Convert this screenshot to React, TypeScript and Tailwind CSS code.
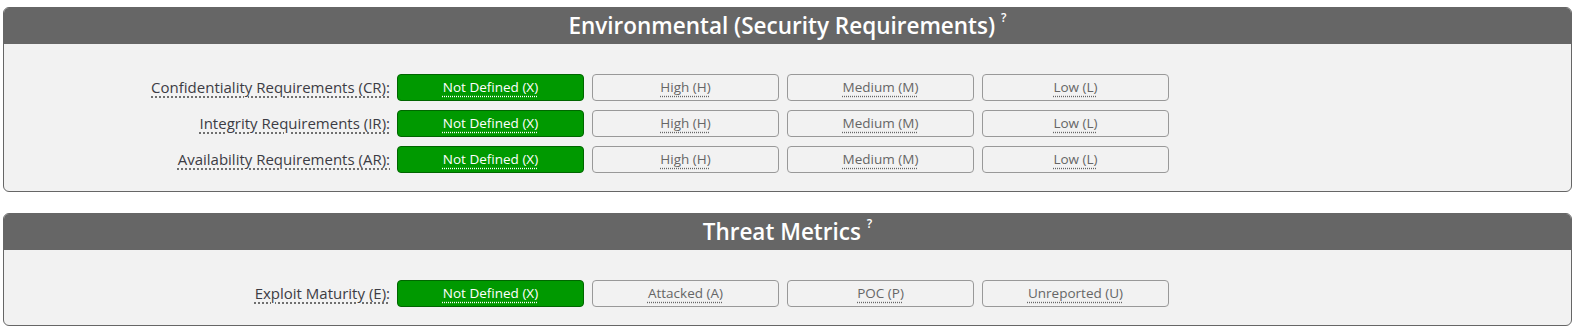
import React from 'react';

interface Metric {
  label: string;
  options: string[];
  selected: number;
}

interface Section {
  title: string;
  metrics: Metric[];
}

const sections: Section[] = [
  {
    title: 'Environmental (Security Requirements)',
    metrics: [
      { label: 'Confidentiality Requirements (CR):', options: ['Not Defined (X)', 'High (H)', 'Medium (M)', 'Low (L)'], selected: 0 },
      { label: 'Integrity Requirements (IR):', options: ['Not Defined (X)', 'High (H)', 'Medium (M)', 'Low (L)'], selected: 0 },
      { label: 'Availability Requirements (AR):', options: ['Not Defined (X)', 'High (H)', 'Medium (M)', 'Low (L)'], selected: 0 },
    ],
  },
  {
    title: 'Threat Metrics',
    metrics: [
      { label: 'Exploit Maturity (E):', options: ['Not Defined (X)', 'Attacked (A)', 'POC (P)', 'Unreported (U)'], selected: 0 },
    ],
  },
];

const MetricRow: React.FC<{ metric: Metric }> = ({ metric }) => (
  <div className="flex items-center">
    <div className="w-[393px] shrink-0 pr-[7px] text-right text-[15px] text-[#3c3c44]">
      <span className="underline decoration-dotted decoration-[#444] underline-offset-[3px]">{metric.label}</span>
    </div>
    <div className="flex gap-[8px]">
      {metric.options.map((opt, i) => (
        <button
          key={opt}
          className={
            i === metric.selected
              ? 'w-[187px] h-[27px] rounded-[4px] border border-[#006600] bg-[#009900] text-[13.5px] text-white'
              : 'w-[187px] h-[27px] rounded-[4px] border border-[#999] bg-[#f2f2f2] text-[13.5px] text-[#666]'
          }
        >
          <span className="underline decoration-dotted underline-offset-[3px]">{opt}</span>
        </button>
      ))}
    </div>
  </div>
);

export default function App() {
  return (
    <div className="bg-white pt-[7px] pl-[3px] pr-[6px] flex flex-col gap-[21px] font-['Open_Sans',sans-serif]">
      {sections.map(s => (
        <div key={s.title} className="rounded-[6px] border border-[#666] bg-[#f2f2f2] overflow-hidden">
          <div className="h-[36px] bg-[#666] flex items-center justify-center text-white text-[22.5px] font-semibold">
            {s.title}
            <sup className="ml-[6px] text-[12px] -translate-y-[2px]">?</sup>
          </div>
          <div className="pt-[30px] pb-[18px] flex flex-col gap-[9px]">
            {s.metrics.map(m => (
              <MetricRow key={m.label} metric={m} />
            ))}
          </div>
        </div>
      ))}
    </div>
  );
}
